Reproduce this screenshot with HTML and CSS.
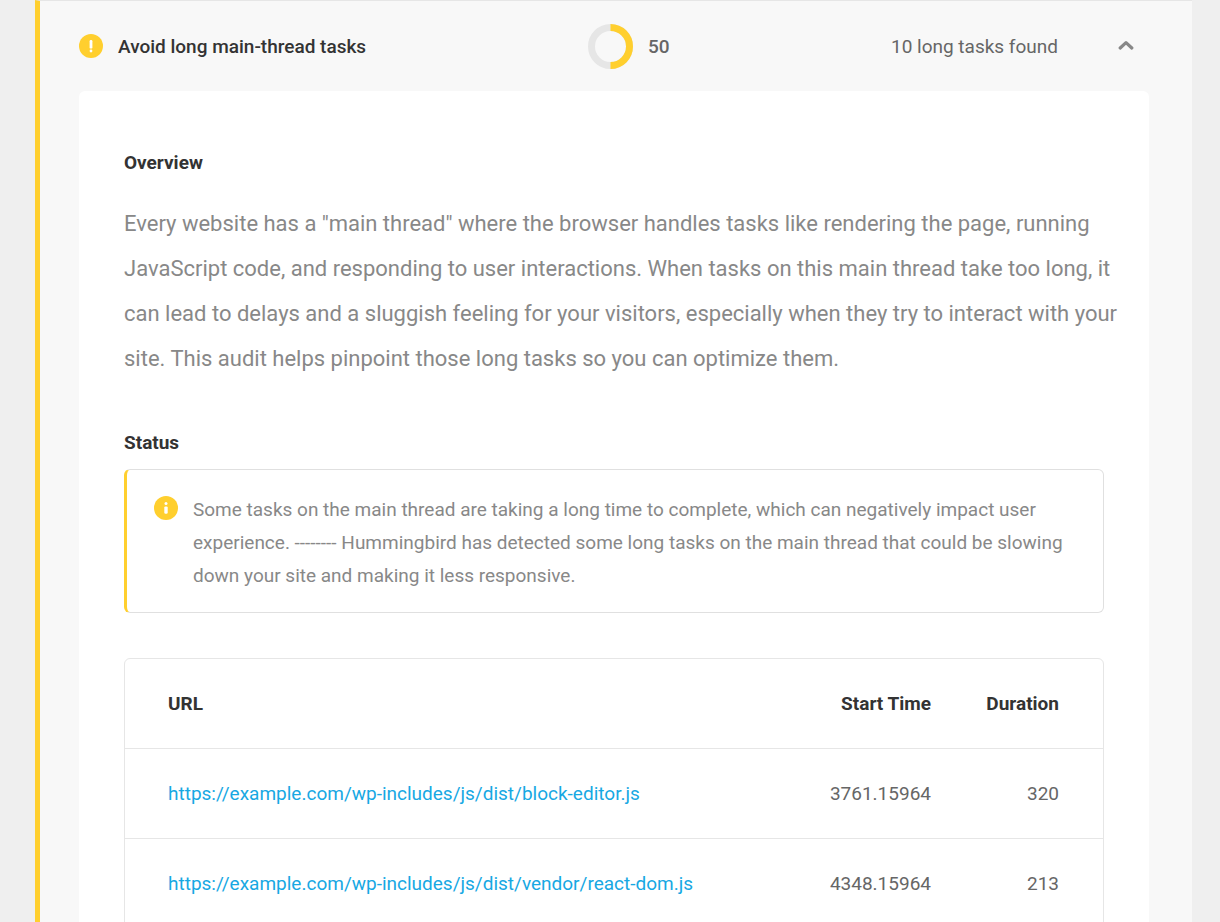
FILE: index.html
```html
<!DOCTYPE html>
<html lang="en">
<head>
<meta charset="utf-8">
<meta name="viewport" content="width=device-width, initial-scale=1">
<title>Avoid long main-thread tasks</title>
<link rel="stylesheet" href="styles.css">
</head>
<body>
<main class="audit">
  <header class="audit-header">
    <div class="audit-title">
      <svg class="icon" viewBox="0 0 24 24" aria-hidden="true">
        <circle cx="12" cy="12" r="12" fill="#ffcf2e"/>
        <rect x="10.6" y="6" width="2.8" height="8.6" rx="1.2" fill="#fff"/>
        <circle cx="12" cy="17" r="1.4" fill="#fff"/>
      </svg>
      <h2 class="heading title-text">Avoid long main-thread tasks</h2>
    </div>
    <div class="audit-score">
      <svg class="score-ring" viewBox="0 0 45 45" aria-hidden="true">
        <circle cx="22.5" cy="22.5" r="19" fill="none" stroke="#e6e6e6" stroke-width="7"/>
        <path d="M22.5 3.5a19 19 0 0 1 0 38" fill="none" stroke="#ffcf2e" stroke-width="7"/>
      </svg>
      <span class="score-value">50</span>
    </div>
    <span class="audit-result">10 long tasks found</span>
    <button class="toggle" type="button" aria-label="Collapse" aria-expanded="true">
      <svg class="chevron" viewBox="0 0 16 12" aria-hidden="true">
        <path d="M2.2 8l5.8-5.4L13.8 8" fill="none" stroke="#888" stroke-width="3.2" stroke-linecap="round" stroke-linejoin="round"/>
      </svg>
    </button>
  </header>

  <div class="audit-body">
    <section>
      <h3 class="heading">Overview</h3>
      <p class="overview-text">Every website has a "main thread" where the browser handles tasks like rendering the page, running JavaScript code, and responding to user interactions. When tasks on this main thread take too long, it can lead to delays and a sluggish feeling for your visitors, especially when they try to interact with your site. This audit helps pinpoint those long tasks so you can optimize them.</p>
    </section>

    <section>
      <h3 class="heading">Status</h3>
      <div class="notice">
        <svg class="icon" viewBox="0 0 24 24" aria-hidden="true">
          <circle cx="12" cy="12" r="12" fill="#ffcf2e"/>
          <circle cx="12" cy="7.6" r="1.5" fill="#fff"/>
          <rect x="10.3" y="10.4" width="3.4" height="7.4" rx="1.2" fill="#fff"/>
        </svg>
        <p class="notice-text">Some tasks on the main thread are taking a long time to complete, which can negatively impact user experience. -------- Hummingbird has detected some long tasks on the main thread that could be slowing down your site and making it less responsive.</p>
      </div>
    </section>

    <table class="tasks">
      <thead>
        <tr><th class="url" scope="col">URL</th><th class="start" scope="col">Start Time</th><th class="duration" scope="col">Duration</th></tr>
      </thead>
      <tbody>
        <tr><td class="url"><a class="link" href="https://example.com/wp-includes/js/dist/block-editor.js">https://example.com/wp-includes/js/dist/block-editor.js</a></td><td class="start">3761.15964</td><td class="duration">320</td></tr>
        <tr><td class="url"><a class="link" href="https://example.com/wp-includes/js/dist/vendor/react-dom.js">https://example.com/wp-includes/js/dist/vendor/react-dom.js</a></td><td class="start">4348.15964</td><td class="duration">213</td></tr>
      </tbody>
    </table>
  </div>
</main>
</body>
</html>
```
FILE: styles.css
```css
* { box-sizing: border-box; }

body {
  margin: 0;
  padding: 0 28px 0 35px;
  background: #efefef;
  color: #666;
  font-family: Roboto, "Liberation Sans", sans-serif;
  font-size: 19px;
  line-height: 33px;
}

.audit {
  padding: 0 43px 0 39px;
  border-top: 1px solid #e6e6e6;
  border-left: 5px solid #ffcf2e;
  background: #f8f8f8;
}

.audit-header {
  display: grid;
  grid-template-columns: 509px 1fr auto 91px;
  align-items: center;
  height: 90px;
}

.audit-title { display: flex; align-items: center; gap: 15px; }
.audit-score { display: flex; align-items: center; gap: 15px; }
.score-value { font-weight: 500; }

.icon { flex: none; width: 24px; height: 24px; }
.score-ring { flex: none; width: 45px; height: 45px; }

.toggle {
  justify-self: end;
  display: grid;
  place-items: center;
  width: 46px;
  height: 45px;
  padding: 0;
  border: 0;
  background: none;
}

.chevron { width: 16px; height: 12px; }

.heading {
  margin: 0;
  color: #333;
  font-size: 19px;
  font-weight: 700;
  line-height: 33px;
}

.title-text { font-weight: 500; }

.audit-body {
  padding: 55px 45px 45px;
  border-radius: 6px;
  background: #fff;
}

.overview-text {
  margin: 22px -20px 45px 0;
  color: #888;
  font-size: 22px;
  line-height: 45px;
}

.notice {
  display: flex;
  gap: 15px;
  margin: 10px 0 45px;
  padding: 23px 30px 20px 27px;
  border: 1px solid #e0e0e0;
  border-left: 3px solid #ffcf2e;
  border-radius: 6px;
}

.notice .icon { margin-top: 3px; }
.notice-text { margin: 0; color: #888; }

.tasks {
  width: 100%;
  border: 1px solid #e6e6e6;
  border-radius: 6px;
  border-spacing: 0;
}

.tasks th, .tasks td { height: 90px; padding: 0; text-align: right; }
.tasks th { height: 89px; color: #333; font-weight: 700; }
.tasks td { border-top: 1px solid #e6e6e6; }
.tasks .url { padding-left: 43px; text-align: left; }
.tasks .start { width: 150px; }
.tasks .duration { width: 172px; padding-right: 44px; }

.link { color: #17a8e3; text-decoration: none; }
```
